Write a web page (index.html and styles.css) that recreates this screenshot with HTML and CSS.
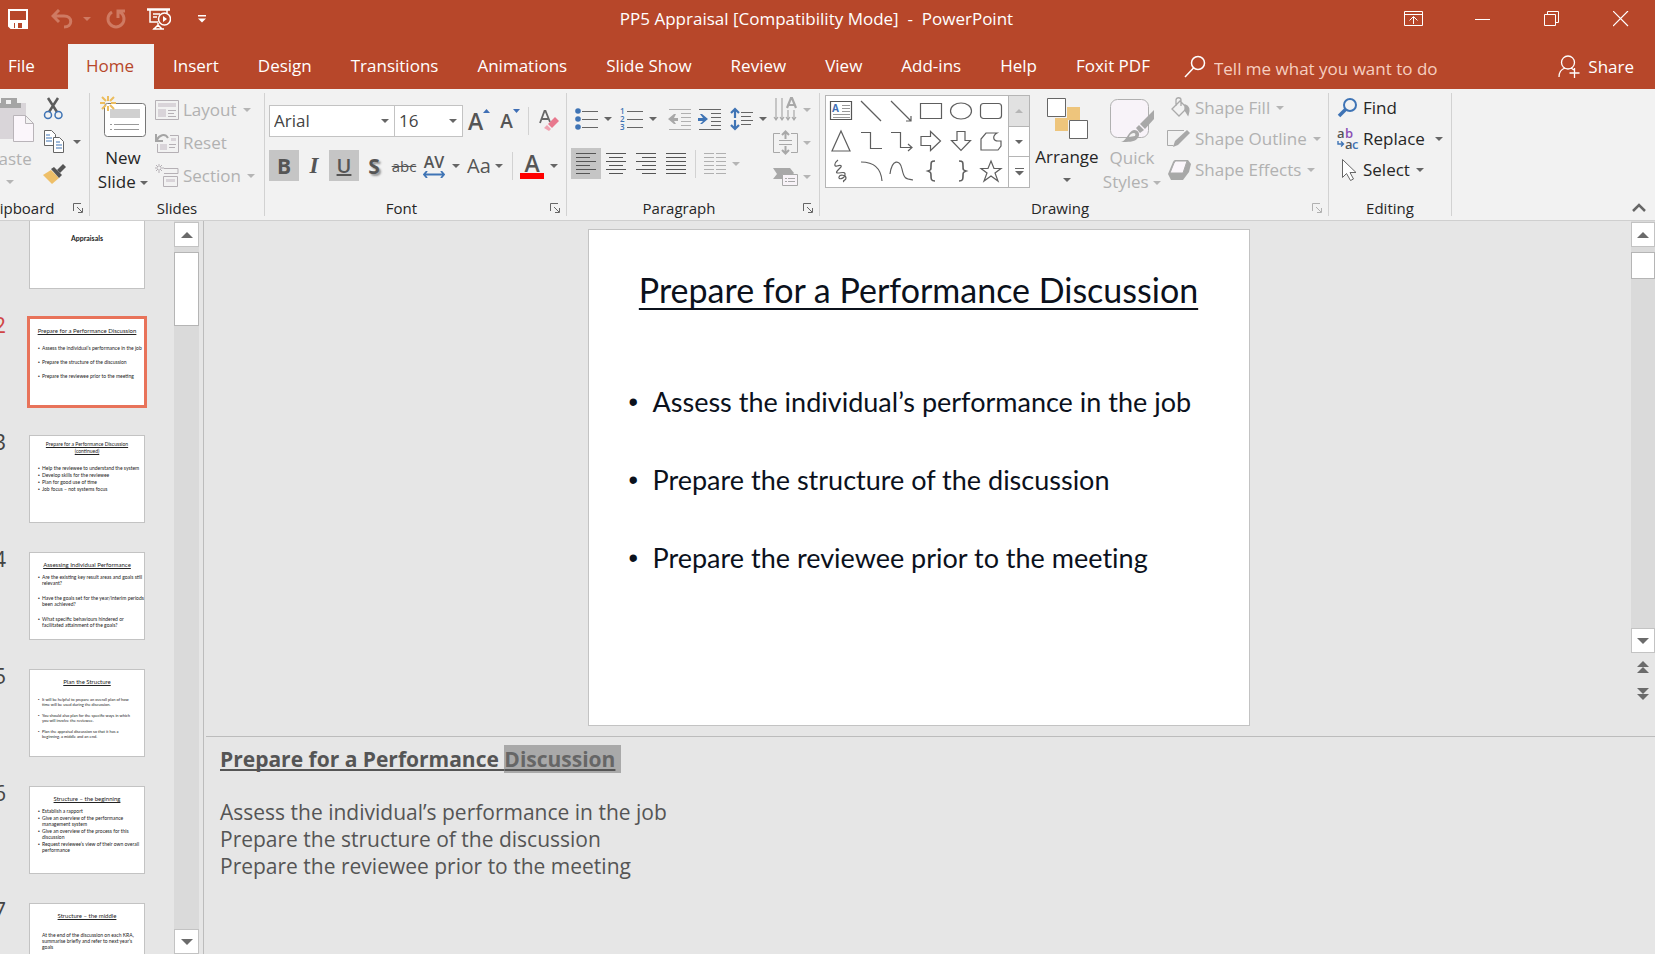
FILE: index.html
```html
<!DOCTYPE html>
<html lang="en">

<head>
    <meta charset="UTF-8">
    <meta name="viewport" content="width=device-width, initial-scale=1.0">
    <title>PP5 Appraisal [Compatibility Mode] - PowerPoint</title>
    <link rel="stylesheet" href="styles.css">
</head>

<body>
    <header class="header">
        <div class="title-bar">
            <div class="quick-access">
                <button aria-label="Save">
                    <svg width="20" height="20" viewBox="0 0 20 20"><path d="M1 1h18v18H3l-2-2z" fill="none" stroke="#fff" stroke-width="2"/><path d="M2 11h16v7H2z" fill="#fff"/><path d="M6 14h8v5H6z" fill="#b7472a"/><path d="M7 14h3v5H7z" fill="#fff"/></svg>
                </button>
                <button class="qa-undo" aria-label="Undo" disabled>
                    <svg width="22" height="20" viewBox="0 0 22 20" fill="none" stroke="#cf7a62" stroke-width="3"><path d="M8 1L2 7l6 6M3 7h10c9 0 9 11 0 11"/></svg>
                    <i class="caret qa-caret"></i>
                </button>
                <button class="qa-redo" aria-label="Repeat" disabled>
                    <svg width="22" height="20" viewBox="0 0 22 20" fill="none" stroke="#cf7a62" stroke-width="3"><path d="M7 3a8 8 0 1 0 8 0M13 9V2h7"/></svg>
                </button>
                <button class="qa-show" aria-label="Start From Beginning">
                    <svg width="24" height="22" viewBox="0 0 24 22" fill="none" stroke="#fff" stroke-width="1.5"><path d="M0 1.500h23" stroke-width="2.500"/><path d="M3 2v12h8M20 2v3M6 6h7M6 9h4M11 15v3M7 21l4-4 4 4zM6 21h11"/><circle cx="17.500" cy="11" r="6"/><path d="M16 8l4 3-4 3z" fill="#fff" stroke="none"/></svg>
                </button>
                <button class="qa-more" aria-label="Customize Quick Access Toolbar">
                    <svg width="8" height="8" viewBox="0 0 8 8" fill="#fff"><path d="M0 0h8v1.500H0zM0 3.500h8l-4 4z"/></svg>
                </button>
            </div>
            <h1 class="window-title">PP5 Appraisal [Compatibility Mode]&nbsp; -&nbsp; PowerPoint</h1>
            <div class="window-controls">
                <button aria-label="Ribbon Display Options"><svg width="20" height="16" viewBox="0 0 20 16" fill="none" stroke="#fff"><path d="M.5.5h18v14H.5zM.5 3.500h18M9.500 13V6M5.500 9.500l4-4 4 4"/></svg></button>
                <button aria-label="Minimize"><svg width="16" height="16" viewBox="0 0 16 16" stroke="#fff"><path d="M0 8.500h15"/></svg></button>
                <button aria-label="Restore Down"><svg width="16" height="16" viewBox="0 0 16 16" fill="none" stroke="#fff"><path d="M.5 3.500h11v11H.5zM3.500 3V.5h11v11H12"/></svg></button>
                <button aria-label="Close"><svg width="16" height="16" viewBox="0 0 16 16" stroke="#fff" stroke-width="1.200"><path d="M0 0l15 15M15 0L0 15"/></svg></button>
            </div>
        </div>
        <nav class="tabs">
            <button class="tab tab-file">File</button>
            <button class="tab active">Home</button>
            <button class="tab">Insert</button>
            <button class="tab">Design</button>
            <button class="tab">Transitions</button>
            <button class="tab">Animations</button>
            <button class="tab">Slide Show</button>
            <button class="tab">Review</button>
            <button class="tab">View</button>
            <button class="tab">Add-ins</button>
            <button class="tab">Help</button>
            <button class="tab">Foxit PDF</button>
            <label class="tell-me">
                <svg width="22" height="24" viewBox="0 0 22 24" fill="none" stroke="#fff" stroke-width="1.500"><circle cx="14" cy="8" r="6.500"/><path d="M9.500 13L1 22"/></svg>
                <input type="text" placeholder="Tell me what you want to do" aria-label="Tell me what you want to do">
            </label>
            <button class="share">
                <svg width="22" height="24" viewBox="0 0 22 24" fill="none" stroke="#fff" stroke-width="1.300"><circle cx="10" cy="7.500" r="6.500"/><path d="M1 22c0-5 3-8 6-9M13 13l3 2M16.500 13v10M11.500 18h10"/></svg>
                Share
            </button>
        </nav>
    </header>

    <section class="ribbon">
        <div class="group group-clipboard">
            <div class="group-body">
                <button class="big paste" disabled>
                    <svg width="50" height="46" viewBox="0 0 50 46"><path d="M1 6h40v36H1z" fill="#d9d5d9"/><path d="M16 1h16v5h4v5H8V6h8z" fill="#a5a5a5"/><path d="M21 3h5v4h-5z" fill="#f2f2f2"/><path d="M28.500 18.500h12l8 8v18h-20zM40.500 18.500v8h8" fill="#fbf6fb" stroke="#b9b4b9"/></svg>
                    <span>Paste</span>
                    <i class="caret"></i>
                </button>
                <div class="stack clip-tools">
                    <button aria-label="Cut"><svg width="22" height="23" viewBox="0 0 22 23" fill="none"><path d="M5 1l9 14M15 1L6 15" stroke="#5c5c5c" stroke-width="2.500"/><circle cx="5" cy="18" r="3.500" stroke="#3f74b5" stroke-width="1.500"/><circle cx="15.500" cy="18" r="3.500" stroke="#3f74b5" stroke-width="1.500"/></svg></button>
                    <button aria-label="Copy"><svg width="22" height="23" viewBox="0 0 22 23" fill="#fff" stroke="#666"><path d="M1.500.5h7l4 4v11h-11z"/><path d="M10.500 7.500h6l4 4v11h-10z"/><path d="M3 5h4M3 8h6M3 11h6M13 12h4M13 15h6M13 18h6" stroke="#3f74b5"/></svg><i class="caret"></i></button>
                    <button aria-label="Format Painter"><svg width="24" height="22" viewBox="0 0 24 22"><path d="M0 12l8-5 8 8-7 6z" fill="#eebf68"/><path d="M8 6l3-2 8 8-3 3z" fill="#555"/><path d="M14 7l6-6 3 3-6 6z" fill="#555"/></svg></button>
                </div>
            </div>
            <div class="group-footer"><span>Clipboard</span><button class="launcher" aria-label="Clipboard options"><svg width="10" height="10" viewBox="0 0 10 10" fill="none" stroke="currentColor"><path d="M.5 8V.5H8M4 4l5 5M9.500 5v4.500H5"/></svg></button></div>
        </div>

        <div class="group group-slides">
            <div class="group-body">
                <button class="big new-slide">
                    <svg width="46" height="44" viewBox="0 0 46 44"><rect x="4.500" y="8.500" width="41" height="33" rx="3" fill="#fff" stroke="#777"/><path d="M10 14h30v9H10z" fill="#d0d0d0"/><path d="M10 29.500h2M14 29.500h25M10 34.500h2M14 34.500h25" stroke="#999"/><path d="M8 1v5M8 11v5M0 8h5M11 8h5M2 2l4 4M10 10l4 4M14 2l-4 4M6 10l-4 4" stroke="#ecbd5e" stroke-width="2"/></svg>
                    <span>New</span>
                    <span>Slide <i class="caret"></i></span>
                </button>
                <div class="stack slide-tools">
                    <button class="row" disabled><svg width="24" height="20" viewBox="0 0 24 20" fill="none" stroke="#b5b0b5"><path d="M.5.5h23v19H.5z"/><path d="M3 3h18v4H3zM3 9h8v8H3z" fill="#d9d4d9" stroke="none"/><path d="M13 10.500h8M13 13.500h6M13 16.500h8"/></svg>Layout<i class="caret"></i></button>
                    <button class="row" disabled><svg width="24" height="20" viewBox="0 0 24 20" fill="none" stroke="#b5b0b5"><path d="M15 2.500h8.500v17h-21V11"/><path d="M5 11h7v6H5zM16 5h5v3h-5z" fill="#d9d4d9" stroke="none"/><path d="M14 11.500h7M14 14.500h6"/><path d="M13 5c-3-5-9-3-11 2M1 1v7h7" stroke="#a5a5a5" stroke-width="2"/></svg>Reset</button>
                    <button class="row" disabled><svg width="24" height="24" viewBox="0 0 24 24" fill="none" stroke="#b5b0b5"><path d="M9 4.500h14v5H9M8.500 12.500h14v10h-14z"/><path d="M11 15h9v3h-9z" fill="#d9d4d9" stroke="none"/><path d="M4 0v3M4 5v4M0 4h3M5 4h4M1 1l2 2M7 1L5 3M1 7l2-2M5 5l2 2"/></svg>Section<i class="caret"></i></button>
                </div>
            </div>
            <div class="group-footer"><span>Slides</span></div>
        </div>

        <div class="group group-font">
            <div class="group-body">
                <div class="tool-line font-line">
                    <label class="combo combo-name"><select aria-label="Font"><option>Arial</option></select></label>
                    <label class="combo combo-size"><select aria-label="Font Size"><option>16</option></select></label>
                    <button class="grow" aria-label="Increase Font Size"><b>A</b><svg width="7" height="4" viewBox="0 0 7 4"><path d="M0 4h7L3.500 0z" fill="#3f6fb5"/></svg></button>
                    <button class="shrink" aria-label="Decrease Font Size"><b>A</b><svg width="7" height="4" viewBox="0 0 7 4"><path d="M0 0h7L3.500 4z" fill="#3f6fb5"/></svg></button>
                    <span class="divider"></span>
                    <button class="tool" aria-label="Clear All Formatting"><svg width="20" height="22" viewBox="0 0 20 22"><path d="M1 13L5.500 1h1L11 12M3 9h6" fill="none" stroke="#666" stroke-width="1.800"/><path d="M9 14l7-7 4 4-7 7z" fill="#e8788d"/><path d="M8 15l4 4-2 2-5-3z" fill="#f0a3b1"/></svg></button>
                </div>
                <div class="tool-line style-line">
                    <button class="tool pressed bold">B</button>
                    <button class="tool italic">I</button>
                    <button class="tool pressed underline">U</button>
                    <button class="tool shadow">S</button>
                    <button class="tool strike">abc</button>
                    <button class="tool spacing"><span>AV</span><svg width="22" height="7" viewBox="0 0 22 7" fill="none" stroke="#3f74b5" stroke-width="1.800"><path d="M1 3.500h20M4 0L1 3.500 4 7M18 0l3 3.500L18 7"/></svg></button><i class="caret"></i>
                    <button class="tool case">Aa</button><i class="caret"></i>
                    <span class="divider"></span>
                    <button class="tool font-color">A</button><i class="caret"></i>
                </div>
            </div>
            <div class="group-footer"><span>Font</span><button class="launcher" aria-label="Font options"><svg width="10" height="10" viewBox="0 0 10 10" fill="none" stroke="currentColor"><path d="M.5 8V.5H8M4 4l5 5M9.500 5v4.500H5"/></svg></button></div>
        </div>

        <div class="group group-paragraph">
            <div class="group-body">
                <div class="para-main">
                    <div class="tool-line list-line">
                        <button aria-label="Bullets"><svg width="23" height="22" viewBox="0 0 23 22"><g fill="#3f74b5"><circle cx="3" cy="3" r="2.800"/><circle cx="3" cy="11" r="2.800"/><circle cx="3" cy="19" r="2.800"/></g><path d="M7 3.500h16M7 11.500h16M7 19.500h16" stroke="#666"/></svg></button><i class="caret"></i>
                        <button class="numbering" aria-label="Numbering"><svg width="23" height="24" viewBox="0 0 23 24"><g fill="#3f74b5" font-family="Open Sans, sans-serif" font-size="8" font-weight="600"><text x="0" y="7">1</text><text x="0" y="15">2</text><text x="0" y="23">3</text></g><path d="M7 4.500h16M7 12.500h16M7 20.500h16" stroke="#666"/></svg></button><i class="caret"></i>
                        <button class="outdent" aria-label="Decrease List Level" disabled><svg width="23" height="22" viewBox="0 0 23 22"><path d="M1 1.500h22M13 5.500h10M13 9.500h10M13 13.500h10M13 17.500h10M1 21.500h22" stroke="#b0b0b0"/><path d="M0 11l6-5h2l-2 4h4v3H6l2 3H6z" fill="#a8a8a8"/></svg></button>
                        <button class="indent" aria-label="Increase List Level"><svg width="23" height="22" viewBox="0 0 23 22"><path d="M1 1.500h22M13 5.500h10M13 9.500h10M13 13.500h10M13 17.500h10M1 21.500h22" stroke="#666"/><path d="M10 11L4 6H2l3 4H0v3h5l-3 3h2z" fill="#3f74b5"/></svg></button>
                        <button class="line-spacing" aria-label="Line Spacing"><svg width="23" height="24" viewBox="0 0 23 24"><path d="M11 5.500h12M11 9.500h10M11 13.500h12M11 17.500h10" stroke="#666"/><path d="M5 11V2M1 6l4-4 4 4M5 13v9M1 18l4 4 4-4" fill="none" stroke="#3f74b5" stroke-width="2.200"/></svg></button><i class="caret"></i>
                    </div>
                    <div class="tool-line align-line">
                        <button class="tool pressed" aria-label="Align Left"><svg width="20" height="22" viewBox="0 0 20 22" stroke="#555"><path d="M0 .5h20M0 4.500h14M0 8.500h20M0 12.500h14M0 16.500h20M0 20.500h14"/></svg></button>
                        <button class="tool" aria-label="Center"><svg width="20" height="22" viewBox="0 0 20 22" stroke="#555"><path d="M0 .5h20M3 4.500h14M0 8.500h20M3 12.500h14M0 16.500h20M3 20.500h14"/></svg></button>
                        <button class="tool" aria-label="Align Right"><svg width="20" height="22" viewBox="0 0 20 22" stroke="#555"><path d="M0 .5h20M6 4.500h14M0 8.500h20M6 12.500h14M0 16.500h20M6 20.500h14"/></svg></button>
                        <button class="tool" aria-label="Justify"><svg width="20" height="22" viewBox="0 0 20 22" stroke="#555"><path d="M0 .5h20M0 4.500h20M0 8.500h20M0 12.500h20M0 16.500h20M0 20.500h20"/></svg></button>
                        <span class="divider"></span>
                        <button aria-label="Columns" disabled><svg width="22" height="22" viewBox="0 0 22 22" stroke="#b0b0b0"><path d="M0 .5h10M0 4.500h10M0 8.500h10M0 12.500h10M0 16.500h10M0 20.500h10M12 .5h10M12 4.500h10M12 8.500h10M12 12.500h10M12 16.500h10M12 20.500h10"/></svg><i class="caret"></i></button>
                    </div>
                </div>
                <div class="stack text-tools">
                    <button aria-label="Text Direction" disabled><svg width="25" height="25" viewBox="0 0 25 25" fill="none" stroke="#a8a8a8" stroke-width="1.200"><path d="M3 1v22M1 20l2 3 2-3M9 1v22M7 20l2 3 2-3M15 13v10M13 20l2 3 2-3M21 13v10M19 20l2 3 2-3"/><path d="M14 11l4-10h1l4 10M15.500 8h6" stroke-width="2.200"/></svg><i class="caret"></i></button>
                    <button aria-label="Align Text" disabled><svg width="25" height="25" viewBox="0 0 25 25" fill="none" stroke="#a8a8a8"><path d="M7 3.500H.5v19H7M18 3.500h6.500v19H18M6 10.500h13M6 14.500h13"/><path d="M12.500 9V2M9 5l3.500-3.500L16 5M12.500 16v7M9 20l3.500 3.500L16 20" stroke-width="2"/></svg><i class="caret"></i></button>
                    <button aria-label="Convert to SmartArt" disabled><svg width="25" height="20" viewBox="0 0 25 20"><path d="M0 1h17l4 5-5 6H0l4-5z" fill="#a8a8a8"/><path d="M9.500 7.500h15v11h-15z" fill="#f8f3f8" stroke="#a8a8a8"/><path d="M12 11.500h2M15 11.500h7M12 14.500h2M15 14.500h7" stroke="#a8a8a8"/></svg><i class="caret"></i></button>
                </div>
            </div>
            <div class="group-footer"><span>Paragraph</span><button class="launcher" aria-label="Paragraph options"><svg width="10" height="10" viewBox="0 0 10 10" fill="none" stroke="currentColor"><path d="M.5 8V.5H8M4 4l5 5M9.500 5v4.500H5"/></svg></button></div>
        </div>

        <div class="group group-drawing">
            <div class="group-body">
                <div class="gallery">
                    <div class="shapes">
                        <button aria-label="Text Box"><svg width="24" height="24" viewBox="0 0 24 24"><path d="M1.500 2.500h21v18h-21z" fill="#fff" stroke="#555"/><text x="3" y="13" font-family="Open Sans, sans-serif" font-size="10" font-weight="700" fill="#3f6fb5">A</text><path d="M13 6.500h8M13 9.500h8M13 12.500h8M4 15.500h17M4 18.500h17" stroke="#999"/></svg></button>
                        <button aria-label="Line"><svg width="24" height="24" viewBox="0 0 24 24"><path d="M2 2l20 20"/></svg></button>
                        <button aria-label="Arrow"><svg width="24" height="24" viewBox="0 0 24 24"><path d="M2 2l20 20M22 17v5h-5"/></svg></button>
                        <button aria-label="Rectangle"><svg width="24" height="24" viewBox="0 0 24 24"><path d="M1.500 4.500h21v15h-21z"/></svg></button>
                        <button aria-label="Oval"><svg width="24" height="24" viewBox="0 0 24 24"><ellipse cx="12" cy="12" rx="10.500" ry="8"/></svg></button>
                        <button aria-label="Rounded Rectangle"><svg width="24" height="24" viewBox="0 0 24 24"><rect x="1.500" y="4.500" width="21" height="15" rx="3"/></svg></button>
                        <button aria-label="Triangle"><svg width="24" height="24" viewBox="0 0 24 24"><path d="M12 2l9 20H3z"/></svg></button>
                        <button aria-label="Elbow Connector"><svg width="24" height="24" viewBox="0 0 24 24"><path d="M2 3.500h9.500v16H23"/></svg></button>
                        <button aria-label="Elbow Arrow Connector"><svg width="24" height="24" viewBox="0 0 24 24"><path d="M2 3.500h9.500v15H23M19 15l4 3.500-4 3.500"/></svg></button>
                        <button aria-label="Right Arrow"><svg width="24" height="24" viewBox="0 0 24 24"><path d="M2 7.500h9.500v-5l10 9.500-10 9.500v-5H2z"/></svg></button>
                        <button aria-label="Down Arrow"><svg width="24" height="24" viewBox="0 0 24 24"><path d="M8 2.500h8v9h5.500L12 21.500 2.500 11.500H8z"/></svg></button>
                        <button aria-label="Freeform"><svg width="24" height="24" viewBox="0 0 24 24"><path d="M7 4h11c-5 3-4 8 1 8h3v5l-3 4H2V10z"/></svg></button>
                        <button aria-label="Scribble"><svg width="24" height="24" viewBox="0 0 24 24"><path d="M9 1c-4 3-4 7-1 6s6-1 3 2-5 5-2 5 8-2 7 2-7 5-6 2 7-2 7 1-4 2-2 4"/></svg></button>
                        <button aria-label="Arc"><svg width="24" height="24" viewBox="0 0 24 24"><path d="M2 3c13 0 20 6 21 19"/></svg></button>
                        <button aria-label="Curve"><svg width="24" height="24" viewBox="0 0 24 24"><path d="M1 15C3 0 11 0 13 10s4 10 11 11"/></svg></button>
                        <button aria-label="Left Brace"><svg width="24" height="24" viewBox="0 0 24 24"><path d="M16 2c-4 0-4 1-4 5s0 4-3 5c3 1 3 2 3 5s0 5 4 5" stroke-width="1.600"/></svg></button>
                        <button aria-label="Right Brace"><svg width="24" height="24" viewBox="0 0 24 24"><path d="M10 2c4 0 4 1 4 5s0 4 3 5c-3 1-3 2-3 5s0 5-4 5" stroke-width="1.600"/></svg></button>
                        <button aria-label="Star"><svg width="24" height="24" viewBox="0 0 24 24"><path d="M12 2l3 7.500h7l-6 4.500 3 8-7-5-7 5 3-8-6-4.500h7z"/></svg></button>
                    </div>
                    <div class="gallery-scroll">
                        <button aria-label="Row up" disabled><i class="caret up"></i></button>
                        <button aria-label="Row down"><i class="caret"></i></button>
                        <button aria-label="More shapes"><svg width="9" height="8" viewBox="0 0 9 8" fill="#666"><path d="M0 0h9v1H0zM0 3h9L4.500 7.500z"/></svg></button>
                    </div>
                </div>
                <button class="big arrange">
                    <svg width="42" height="44" viewBox="0 0 42 44"><path d="M21 10h13v13H21zM9 21h13v13H9z" fill="#eec57c"/><path d="M1.500 1.500h18v18h-18zM23.500 23.500h18v18h-18z" fill="#fff" stroke="#666"/></svg>
                    <span>Arrange</span>
                    <i class="caret"></i>
                </button>
                <button class="big quick-styles" disabled>
                    <svg width="46" height="46" viewBox="0 0 46 46"><rect x="1.500" y="2.500" width="38" height="38" rx="7" fill="#f8f3f9" stroke="#b0b0b0"/><path d="M45 13v9l-9 10-5-5z" fill="#a8a8a8"/><path d="M30 28l5 5-4 3-4-5z" fill="#a8a8a8"/><path d="M12 45c6-1 7-11 13-12 5 0 7 5 3 9-3 3-9 3-16 3z" fill="#a8a8a8"/><path d="M20 40c1-4 8-6 6-1z" fill="#f2f2f2"/></svg>
                    <span>Quick</span>
                    <span>Styles <i class="caret"></i></span>
                </button>
                <div class="stack shape-tools">
                    <button class="row" disabled><svg width="24" height="22" viewBox="0 0 24 22" fill="none" stroke="#aaa" stroke-width="1.300"><path d="M5 12l8-8 7 7-8 8zM9 9V3c0-3 5-3 5 0v6"/><path d="M18 8c4 1 5 5 3 10l-3-5z" fill="#aaa"/></svg>Shape Fill<i class="caret"></i></button>
                    <button class="row" disabled><svg width="24" height="22" viewBox="0 0 24 22" fill="none" stroke="#aaa"><path d="M17 2.500H.5v15h6M20 9v0"/><path d="M6 19l2-6L20 2l3 3-12 12z" fill="#a8a8a8" stroke="none"/></svg>Shape Outline<i class="caret"></i></button>
                    <button class="row" disabled><svg width="24" height="22" viewBox="0 0 24 22"><path d="M1 15L6 3c1-2 2-2 3-2h12l3 4-2 8-6 8H4z" fill="#a8a8a8"/><path d="M7 4c1-2 2-2 3-2h10L16 14H3z" fill="#fbf6fb" stroke="#aaa"/></svg>Shape Effects<i class="caret"></i></button>
                </div>
            </div>
            <div class="group-footer"><span>Drawing</span><button class="launcher" aria-label="Drawing options" disabled><svg width="10" height="10" viewBox="0 0 10 10" fill="none" stroke="currentColor"><path d="M.5 8V.5H8M4 4l5 5M9.500 5v4.500H5"/></svg></button></div>
        </div>

        <div class="group group-editing">
            <div class="group-body">
                <div class="stack edit-tools">
                    <button class="row"><svg width="22" height="22" viewBox="0 0 22 22" fill="none" stroke="#3f74b5"><circle cx="13" cy="8" r="6" stroke-width="2"/><path d="M9 12l-7 7" stroke-width="3.500"/></svg>Find</button>
                    <button class="row"><svg width="22" height="24" viewBox="0 0 22 24" font-family="Open Sans, sans-serif" font-size="13" font-weight="600"><text x="0" y="11" fill="#555">a</text><text x="8" y="11" fill="#8a4fb5">b</text><text x="8" y="22" fill="#555">a</text><text x="15" y="22" fill="#3f74b5">c</text><path d="M1 14v3h5M4 14.500L6.500 17 4 19.500" fill="none" stroke="#3f74b5" stroke-width="1.400"/></svg>Replace<i class="caret replace-caret"></i></button>
                    <button class="row"><svg width="22" height="24" viewBox="0 0 22 24" fill="#fff" stroke="#666"><path d="M5.500 1.500v18l4-4 4 7 3-1.500-3.500-6.500h6z"/></svg>Select<i class="caret"></i></button>
                </div>
            </div>
            <div class="group-footer"><span>Editing</span></div>
        </div>
        <button class="collapse" aria-label="Collapse the Ribbon"><svg width="14" height="9" viewBox="0 0 14 9" fill="none" stroke="#666" stroke-width="2.500"><path d="M1 8l6-6 6 6"/></svg></button>
    </section>

    <main class="workspace">
        <aside class="slides-panel">
            <ol class="thumbs">
                <li>
                    <span class="num">1</span>
                    <div class="thumb thumb-cover"><h3>Appraisals</h3></div>
                </li>
                <li class="selected">
                    <span class="num">2</span>
                    <div class="thumb spaced">
                        <h3>Prepare for a Performance Discussion</h3>
                        <ul>
                            <li>Assess the individual’s performance in the job</li>
                            <li>Prepare the structure of the discussion</li>
                            <li>Prepare the reviewee prior to the meeting</li>
                        </ul>
                    </div>
                </li>
                <li>
                    <span class="num">3</span>
                    <div class="thumb continued">
                        <h3>Prepare for a Performance Discussion<br>(continued)</h3>
                        <ul>
                            <li>Help the reviewee to understand the system</li>
                            <li>Develop skills for the reviewee</li>
                            <li>Plan for good use of time</li>
                            <li>Job focus – not systems focus</li>
                        </ul>
                    </div>
                </li>
                <li>
                    <span class="num">4</span>
                    <div class="thumb questions">
                        <h3>Assessing Individual Performance</h3>
                        <ul>
                            <li>Are the existing key result areas and goals still<br>relevant?</li>
                            <li>Have the goals set for the year/interim periods<br>been achieved?</li>
                            <li>What specific behaviours hindered or<br>facilitated attainment of the goals?</li>
                        </ul>
                    </div>
                </li>
                <li>
                    <span class="num">5</span>
                    <div class="thumb plan">
                        <h3>Plan the Structure</h3>
                        <ul>
                            <li>It will be helpful to prepare an overall plan of how<br>time will be used during the discussion.</li>
                            <li>You should also plan for the specific ways in which<br>you will involve the reviewee.</li>
                            <li>Plan the appraisal discussion so that it has a<br>beginning, a middle and an end.</li>
                        </ul>
                    </div>
                </li>
                <li>
                    <span class="num">6</span>
                    <div class="thumb">
                        <h3>Structure – the beginning</h3>
                        <ul>
                            <li>Establish a rapport</li>
                            <li>Give an overview of the performance<br>management system</li>
                            <li>Give an overview of the process for this<br>discussion</li>
                            <li>Request reviewee’s view of their own overall<br>performance</li>
                        </ul>
                    </div>
                </li>
                <li>
                    <span class="num">7</span>
                    <div class="thumb middle">
                        <h3>Structure – the middle</h3>
                        <p>At the end of the discussion on each KRA,<br>summarise briefly and refer to next year’s<br>goals</p>
                    </div>
                </li>
            </ol>
            <div class="scrollbar panel-scroll">
                <button aria-label="Scroll up"><i class="arrow up"></i></button>
                <div class="track"><div class="handle"></div></div>
                <button aria-label="Scroll down"><i class="arrow"></i></button>
            </div>
        </aside>

        <div class="editor">
            <div class="canvas-row">
                <div class="canvas">
                    <article class="slide">
                        <h2>Prepare for a Performance Discussion</h2>
                        <ul>
                            <li>Assess the individual’s performance in the job</li>
                            <li>Prepare the structure of the discussion</li>
                            <li>Prepare the reviewee prior to the meeting</li>
                        </ul>
                    </article>
                </div>
                <div class="scrollbar canvas-scroll">
                    <button aria-label="Scroll up"><i class="arrow up"></i></button>
                    <div class="track"><div class="handle"></div></div>
                    <button aria-label="Scroll down"><i class="arrow"></i></button>
                    <div class="jumps">
                        <button class="jump" aria-label="Previous Slide"><i class="arrow up"></i><i class="arrow up"></i></button>
                        <button class="jump" aria-label="Next Slide"><i class="arrow"></i><i class="arrow"></i></button>
                    </div>
                </div>
            </div>
            <div class="notes">
                <p class="notes-title">Prepare for a Performance <mark>Discussion</mark></p>
                <p>Assess the individual’s performance in the job</p>
                <p>Prepare the structure of the discussion</p>
                <p>Prepare the reviewee prior to the meeting</p>
            </div>
        </div>
    </main>
</body>

</html>
```
FILE: styles.css
```css
* {
    box-sizing: border-box;
}

body {
    margin: 0;
    height: 100vh;
    display: flex;
    flex-direction: column;
    overflow: hidden;
    font-family: "Open Sans", "Noto Sans", sans-serif;
    font-size: 17px;
    line-height: 24px;
    color: #262626;
    background: #e6e6e6;
}

h1, h2, h3, p, ul, ol {
    margin: 0;
    padding: 0;
    list-style: none;
}

button {
    display: flex;
    align-items: center;
    padding: 0;
    border: none;
    background: none;
    font: inherit;
    color: inherit;
    white-space: nowrap;
}

button:disabled {
    color: #b1b1b1;
}

svg {
    display: block;
    flex: none;
}

.caret {
    flex: none;
    display: inline-block;
    border: 4px solid transparent;
    border-top-color: #666;
    border-bottom: none;
    vertical-align: middle;
}

.caret.up {
    border-top: none;
    border-bottom: 4px solid #b5b5b5;
}

button:disabled .caret {
    border-top-color: #b5b5b5;
}

/* header */
.header {
    background: #b7472a;
    color: #fff;
}

.title-bar {
    display: flex;
    align-items: center;
    height: 37px;
}

.quick-access {
    display: flex;
    align-items: center;
    width: 254px;
    padding-left: 8px;
}

.qa-undo {
    margin-left: 23px;
}

.qa-undo .qa-caret {
    margin-left: 10px;
}

.qa-undo:disabled .qa-caret {
    border-top-color: #cf7a62;
}

.qa-redo {
    margin-left: 14px;
}

.qa-show {
    margin-left: 20px;
}

.qa-more {
    margin-left: 27px;
}

.window-title {
    flex: 1;
    text-align: center;
    font-size: 17px;
    font-weight: normal;
}

.window-controls {
    display: flex;
}

.window-controls button {
    width: 69px;
    height: 36px;
    justify-content: center;
}

.tabs {
    display: flex;
    height: 45px;
    margin-top: 7px;
}

.tab {
    padding: 0 20px 2px 19px;
}

.tab-file {
    padding: 0 33px 2px 8px;
}

.tab.active {
    padding-left: 18px;
    background: #f2f2f2;
    color: #b7472a;
}

.tell-me {
    flex: 1;
    display: flex;
    align-items: center;
    gap: 8px;
    margin-left: 14px;
}

.tell-me input {
    flex: 1;
    border: none;
    outline: none;
    padding: 4px 0 0;
    background: none;
    font: inherit;
}

.tell-me input::placeholder {
    color: #f6cfc0;
    opacity: 1;
}

.share {
    gap: 8px;
    padding-right: 21px;
}

/* ribbon */
.ribbon {
    display: flex;
    padding: 4px 0;
    background: #f2f2f2;
    border-bottom: 1px solid #cfcfcf;
}

.group {
    display: flex;
    flex-direction: column;
    flex: none;
    height: 123px;
    border-right: 1px solid #d2d2d2;
}

.group-body {
    flex: 1;
    display: flex;
    align-items: flex-start;
}

.group-footer {
    display: flex;
    align-items: center;
    height: 16px;
    font-size: 15px;
    line-height: 16px;
}

.group-footer span {
    flex: 1;
    text-align: center;
}

.launcher {
    width: 28px;
    padding-left: 12px;
    color: #666;
}

.big {
    flex-direction: column;
    padding-top: 4px;
}

.big svg {
    margin-bottom: 4px;
}

.big > .caret {
    margin-top: 9px;
}

.stack {
    display: flex;
    flex-direction: column;
}

.row svg {
    margin-right: 4px;
}

.row .caret {
    margin-left: 6px;
}

.tool {
    justify-content: center;
    width: 30px;
    height: 31px;
    color: #555;
}

.tool.pressed {
    background: #c5c5c5;
}

.tool-line {
    display: flex;
    align-items: center;
}

.divider {
    width: 1px;
    height: 28px;
    background: #d2d2d2;
}

.group-clipboard {
    width: 110px;
    margin-left: -20px;
}

.paste {
    width: 60px;
}

.clip-tools {
    gap: 10px;
    margin: 4px 0 0 3px;
}

.clip-tools .caret {
    margin-left: 8px;
}

.group-slides {
    width: 175px;
}

.new-slide {
    width: 54px;
    margin-left: 6px;
    padding-top: 2px;
}

.new-slide svg {
    margin-bottom: 7px;
}

.slide-tools {
    margin-left: 5px;
}

.slide-tools .row {
    height: 33px;
}

.group-font {
    width: 302px;
}

.group-font .group-body {
    flex-direction: column;
    padding: 12px 0 0 4px;
}

.combo {
    position: relative;
    height: 32px;
    border: 1px solid #c3c3c3;
    background: #fff;
}

.combo::after {
    content: "";
    position: absolute;
    right: 5px;
    top: 13px;
    border: 4px solid transparent;
    border-top-color: #666;
    border-bottom: none;
}

.combo select {
    appearance: none;
    width: 100%;
    height: 30px;
    padding: 0 4px;
    border: none;
    background: none;
    font: inherit;
    color: #444;
}

.combo-name {
    width: 126px;
}

.combo-size {
    width: 69px;
    margin-left: -1px;
}

.grow, .shrink {
    align-items: flex-start;
    margin-left: 5px;
    color: #555;
}

.grow b {
    font-size: 23px;
    font-weight: 600;
}

.shrink {
    margin-left: 10px;
}

.shrink b {
    font-size: 19px;
    font-weight: 600;
}

.font-line .divider {
    margin: 0 5px 0 8px;
}

.style-line {
    margin-top: 13px;
}

.bold {
    font-size: 21px;
    font-weight: bold;
}

.italic {
    font-family: "Liberation Serif", serif;
    font-size: 23px;
    font-style: italic;
    font-weight: bold;
}

.underline {
    font-size: 20px;
    font-weight: 600;
    text-decoration: underline;
}

.shadow {
    font-size: 21px;
    font-weight: bold;
    text-shadow: 2px 2px 2px #999;
}

.strike {
    font-size: 15px;
    text-decoration: line-through;
}

.spacing {
    flex-direction: column;
    width: 26px;
    margin: 0 5px 0 2px;
    line-height: 18px;
    font-weight: 600;
}

.spacing span {
    font-size: 16px;
}

.case {
    width: 26px;
    margin: 0 3px 0 6px;
    font-size: 20px;
}

.style-line .divider {
    margin: 0 5px 0 9px;
}

.font-color {
    width: 24px;
    height: 26px;
    margin: 0 6px 0 2px;
    border-bottom: 6px solid #f00;
    font-size: 23px;
    font-weight: 600;
    line-height: 20px;
}

.group-paragraph {
    width: 253px;
}

.para-main {
    width: 201px;
    padding: 13px 0 0 4px;
}

.list-line {
    height: 26px;
    padding-left: 4px;
}

.list-line .caret {
    margin-left: 6px;
}

.numbering {
    margin-left: 8px;
}

.outdent {
    margin-left: 11px;
}

.indent {
    margin-left: 7px;
}

.line-spacing {
    margin-left: 9px;
}

.align-line {
    margin-top: 16px;
}

.align-line .divider {
    margin: 0 8px 0 4px;
}

.align-line .caret {
    margin-left: 6px;
}

.text-tools {
    gap: 8px;
    padding-top: 4px;
    margin-left: 5px;
}

.text-tools button:last-child {
    padding-top: 4px;
}

.text-tools .caret {
    margin-left: 5px;
}

.group-drawing {
    width: 509px;
}

.gallery {
    display: flex;
    height: 93px;
    margin: 2px 0 0 5px;
    border: 1px solid #b5b5b5;
    background: #fff;
}

.shapes {
    display: grid;
    grid-template-columns: repeat(6, 30px);
    grid-auto-rows: 30px;
    width: 182px;
}

.shapes button {
    justify-content: center;
}

.shapes svg {
    fill: none;
    stroke: #5e5e5e;
    stroke-width: 1.2;
}

.shapes text {
    stroke: none;
}

.gallery-scroll {
    display: flex;
    flex-direction: column;
    width: 21px;
    border-left: 1px solid #b5b5b5;
}

.gallery-scroll button {
    flex: 1;
    justify-content: center;
}

.gallery-scroll button + button {
    border-top: 1px solid #b5b5b5;
}

.gallery-scroll button:disabled {
    background: #e1e1e1;
}

.arrange {
    width: 66px;
    margin-left: 4px;
    padding-top: 4px;
}

.quick-styles {
    width: 64px;
    padding-top: 4px;
}

.quick-styles svg {
    margin-bottom: 3px;
}

.shape-tools {
    margin-left: 3px;
}

.shape-tools .row, .edit-tools .row {
    height: 31px;
    padding-bottom: 2px;
}

.group-editing {
    width: 123px;
}

.edit-tools {
    margin-left: 8px;
}

.row .replace-caret {
    margin-left: 10px;
}

.collapse {
    align-self: flex-end;
    margin-left: auto;
    padding: 0 9px 4px 0;
}

/* workspace */
.workspace {
    flex: 1;
    display: flex;
    min-height: 0;
}

.slides-panel {
    display: flex;
    justify-content: space-between;
    width: 204px;
    padding-right: 4px;
    border-right: 1px solid #bcbcbc;
    overflow: hidden;
}

.thumbs {
    margin-top: -20px;
    font-family: Lato, sans-serif;
}

.thumbs > li {
    display: flex;
    gap: 23px;
    height: 117px;
}

.num {
    width: 14px;
    margin-left: -8px;
    text-align: right;
    font-family: "Open Sans", sans-serif;
    font-size: 22px;
    line-height: 12px;
    color: #444;
}

.selected .num {
    color: #d04545;
}

.thumb {
    width: 116px;
    height: 88px;
    padding-top: 8px;
    border: 1px solid #c3c3c3;
    background: #fff;
    font-size: 5px;
    line-height: 6px;
    color: #222;
    white-space: nowrap;
}

.selected .thumb {
    border-color: #e8735a;
    outline: 2px solid #e8735a;
}

.thumb h3 {
    font-size: 6px;
    line-height: 7px;
    font-weight: normal;
    text-align: center;
    text-decoration: underline;
}

.thumb ul {
    padding: 6px 0 0 12px;
}

.thumb ul li {
    margin-bottom: 1px;
}

.thumb ul li::before {
    content: "•";
    float: left;
    margin-left: -4px;
    font-family: "Liberation Sans", sans-serif;
}

.thumb.thumb-cover {
    padding-top: 33px;
}

.thumb-cover h3 {
    font-size: 7px;
    font-weight: bold;
    text-decoration: none;
}

.spaced ul {
    padding-top: 11px;
}

.spaced ul li {
    margin-bottom: 8px;
}

.thumb.continued {
    padding-top: 5px;
}

.continued h3 {
    font-size: 5px;
}

.continued ul {
    padding-top: 10px;
}

.questions ul li {
    margin-bottom: 9px;
}

.plan {
    font-size: 4px;
    line-height: 5px;
}

.plan ul {
    padding-top: 12px;
}

.plan ul li {
    margin-bottom: 6px;
}

.middle p {
    padding: 13px 0 0 12px;
}

.scrollbar {
    flex: none;
    display: flex;
    flex-direction: column;
    width: 25px;
    padding-top: 1px;
    background: #dadada;
}

.scrollbar button {
    justify-content: center;
    height: 25px;
    border: 1px solid #c3c3c3;
    background: #fff;
}

.arrow {
    border: 6px solid transparent;
    border-top-color: #6b6b6b;
    border-bottom: none;
}

.arrow.up {
    border-top: none;
    border-bottom: 6px solid #6b6b6b;
}

.track {
    flex: 1;
    padding-top: 5px;
}

.handle {
    height: 74px;
    border: 1px solid #b5b5b5;
    background: #fff;
}

.canvas-scroll {
    width: 24px;
}

.canvas-scroll .handle {
    height: 27px;
}

.jumps {
    padding-bottom: 29px;
    background: #e6e6e6;
}

.jumps .jump {
    flex-direction: column;
    width: 100%;
    height: 27px;
    border: none;
    background: none;
}

.editor {
    flex: 1;
    display: flex;
    flex-direction: column;
    min-width: 0;
    margin-left: 2px;
}

.canvas-row {
    flex: 1;
    display: flex;
    min-height: 0;
}

.canvas {
    flex: 1;
    display: flex;
    justify-content: center;
    align-items: center;
    padding-bottom: 2px;
}

.slide {
    width: 662px;
    height: 497px;
    padding-top: 36px;
    border: 1px solid #c3c3c3;
    background: #fff;
    font-family: Lato, sans-serif;
    font-variant-ligatures: none;
    color: #0b111c;
}

.slide h2 {
    font-size: 34px;
    line-height: 48px;
    font-weight: normal;
    text-align: center;
    text-decoration: underline;
    text-decoration-thickness: 2px;
    text-decoration-skip-ink: none;
    text-underline-offset: 5px;
}

.slide ul {
    padding: 69px 0 0 64px;
    font-size: 27px;
    line-height: 38px;
}

.slide li {
    margin-bottom: 40px;
}

.slide li::before {
    content: "•";
    float: left;
    margin-left: -24px;
    font-family: "Liberation Sans", sans-serif;
}

.notes {
    flex: none;
    height: 218px;
    padding: 9px 14px;
    border-top: 1px solid #bcbcbc;
    font-size: 21px;
    line-height: 27px;
    color: #555;
}

.notes-title {
    margin-bottom: 26px;
    font-weight: bold;
    text-decoration: underline;
    text-decoration-skip-ink: none;
}

.notes mark {
    padding-right: 6px;
    background: #a9a9a9;
    color: #666;
}
```
